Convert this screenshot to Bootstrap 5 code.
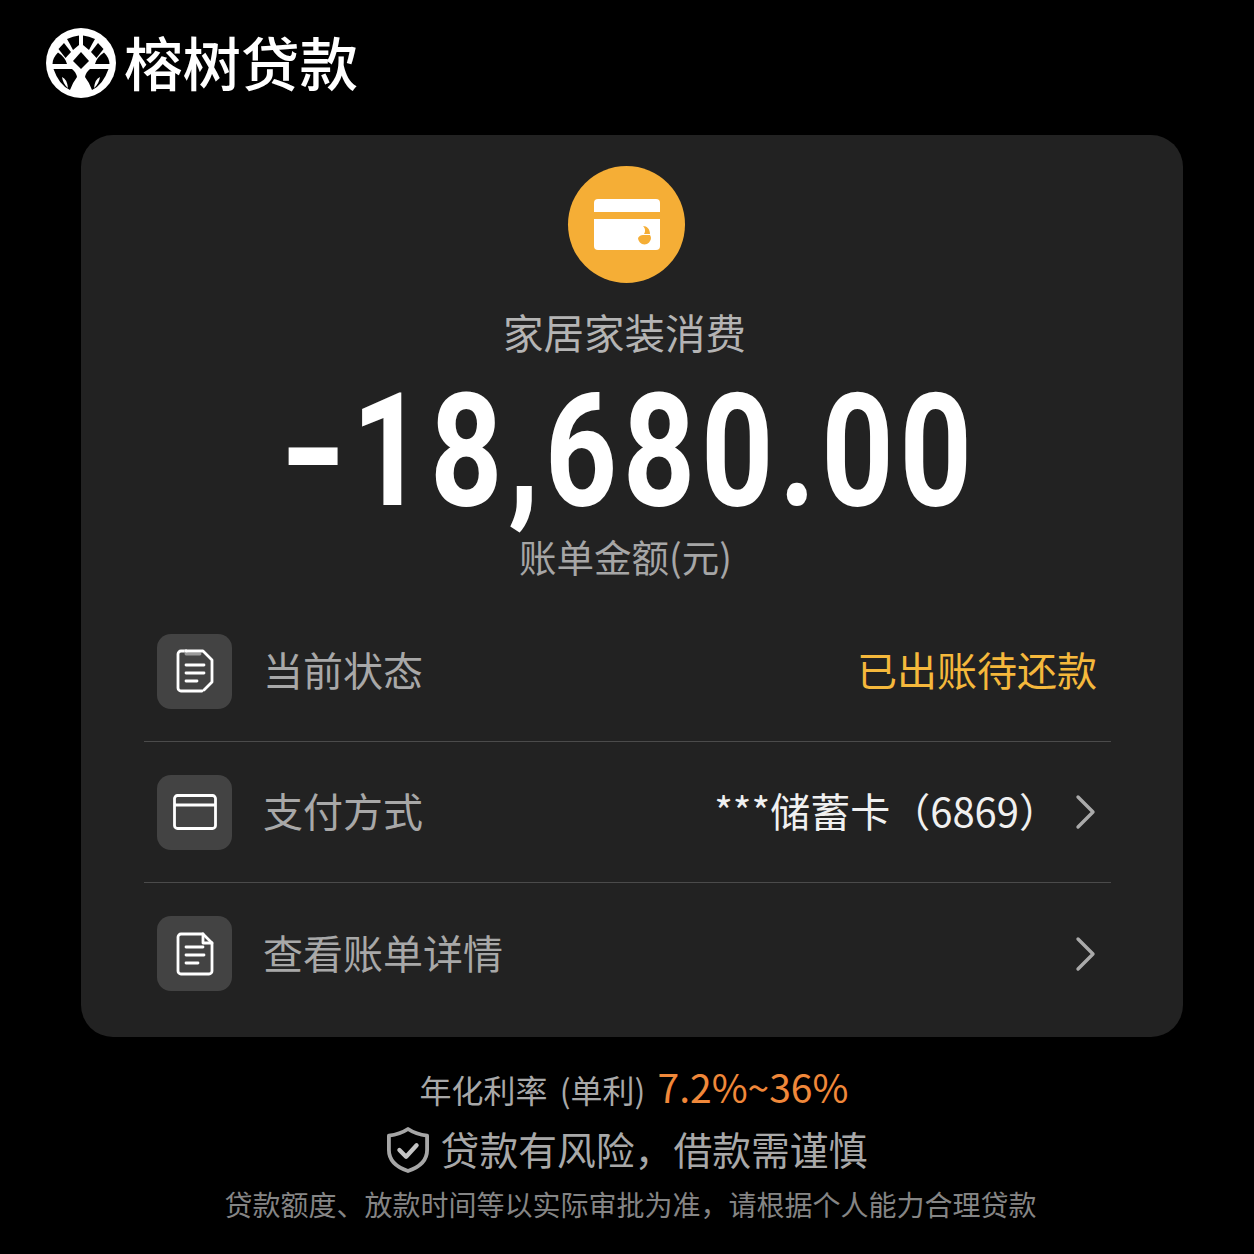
<!DOCTYPE html>
<html lang="zh-CN">

<head>
  <meta charset="UTF-8" />
  <meta name="viewport" content="width=device-width, initial-scale=1.0" />
  <title>账单详情</title>
  <link href="https://cdn.jsdelivr.net/npm/bootstrap@5.3.3/dist/css/bootstrap.min.css" rel="stylesheet" />
  <style>
    body {
      background: #000;
      font-family: "Noto Sans CJK SC", "Noto Sans", sans-serif;
      color: #fff;
      height: 1254px;
      overflow: hidden;
    }

    .brand-bar { height: 135px; padding: 28px 0 0 46px; gap: 8px; }
    .brand-name { font-size: 58.5px; line-height: 70px; font-weight: 500; margin-top: -2px; }

    .bill-card {
      margin: 0 71px 0 81px;
      height: 902px;
      background: #222;
      border-radius: 32px;
      padding: 31px 72px 0 63px;
    }

    .bill-circle { width: 117px; height: 117px; border-radius: 50%; background: #f5ae36; margin-left: -2px; }
    .bill-title { font-size: 40.5px; line-height: 58px; color: #b4b4b4; margin-top: 20px; margin-left: -6px; }
    .bill-amount {
      font-family: Roboto, sans-serif;
      font-weight: 700;
      font-size: 158px;
      line-height: 132px;
      height: 132px;
      letter-spacing: 7px;
      transform: scaleX(0.8);
      margin-top: 24px;
      margin-left: 12px;
      white-space: nowrap;
    }
    .amount-sign { display: inline-block; transform: scaleX(1.4); margin-right: 8px; }
    .bill-label { font-size: 37.5px; line-height: 52px; color: #a6a6a6; margin-top: 13px; margin-left: -4px; }

    .bill-rows { margin-top: 19px; }
    .bill-row { height: 141px; padding: 0 14px 0 13px; border-bottom: 1px solid #4b4b4b; }
    .bill-row:last-child { border-bottom: 0; }
    .row-icon { width: 75px; height: 75px; border-radius: 14px; background: #434343; margin-right: 31px; }
    .row-name { font-size: 40px; line-height: 56px; color: #a8a8a8; margin-top: -4px; }
    .row-status { font-size: 40px; line-height: 56px; color: #f5b83c; margin-top: -4px; }
    .row-value { font-size: 40px; line-height: 56px; color: #f0f0f0; margin-right: 16px; margin-top: -4px; }

    .foot-rate { font-size: 32px; line-height: 46px; color: #a8a8a8; margin-top: 26px; padding-left: 14px; word-spacing: 5px; }
    .foot-rate span { color: #f0883a; font-size: 39px; }
    .foot-risk { font-size: 38.800px; line-height: 56px; color: #a8a8a8; margin-top: 8px; gap: 12px; }
    .foot-risk svg { margin-top: 3px; }
    .foot-note { font-size: 28px; line-height: 40px; color: #858585; margin-top: 8px; padding-left: 7px; }
  </style>
</head>

<body>
  <div class="brand-bar d-flex align-items-start">
    <svg width="70" height="70" viewBox="0 0 70 70">
      <defs>
        <g id="logoHalf">
          <path d="M21 11 Q27 8 33 7.500 L33 17 L27 22 Q24 16 21 11Z" />
          <path d="M18 15 L25 24 L19.500 30 L12.500 21Z" />
          <path d="M12 24.500 Q19 29 21 36 L6.500 36 Q6.500 30 12 24.500Z" />
          <path d="M7.500 41 L26 41 Q30 44 31 49 Q27 54 24 62 Q13 57 7.500 41Z M16 49 Q21 51 22 60 Q17 56 16 49Z" fill-rule="evenodd" />
        </g>
      </defs>
      <circle cx="35" cy="35" r="35" fill="#fff" />
      <use href="#logoHalf" />
      <use href="#logoHalf" transform="matrix(-1 0 0 1 70 0)" />
      <path d="M35 24 L43 33 L35 41 L27 33Z" />
    </svg>
    <div class="brand-name">榕树贷款</div>
  </div>

  <div class="bill-card">
    <div class="d-flex flex-column align-items-center">
      <div class="bill-circle d-flex align-items-center justify-content-center">
        <svg width="66" height="51" viewBox="0 0 66 51">
          <path d="M0 4a4 4 0 0 1 4-4h58a4 4 0 0 1 4 4v9H0z" fill="#fff" />
          <path d="M0 20h66v27a4 4 0 0 1-4 4H4a4 4 0 0 1-4-4z" fill="#fff" />
          <path d="M44 39a6.500 6.500 0 0 0 13 0a6 6 0 0 0-1-3h-6a6 6 0 0 0-6 3z M49 27c4 0 7 3 7 8h-6c2-3 1-6-1-8z" fill="#f5ae36" />
        </svg>
      </div>
      <div class="bill-title">家居家装消费</div>
      <div class="bill-amount"><span class="amount-sign">-</span>18,680.00</div>
      <div class="bill-label">账单金额(元)</div>
    </div>

    <div class="bill-rows">
      <div class="bill-row d-flex align-items-center">
        <div class="row-icon d-flex align-items-center justify-content-center">
          <svg width="38" height="44" viewBox="0 0 38 44" fill="none" stroke="#fff" stroke-width="2.800" stroke-linejoin="round" stroke-linecap="round">
            <path d="M10 2H5a3 3 0 0 0-3 3v34a3 3 0 0 0 3 3h21" />
            <path d="M10 2v3h14" stroke="#999" />
            <path d="M10 2h17l9 9v22l-8 8" />
            <path d="M10 16h18M10 24h18M10 32h11" />
          </svg>
        </div>
        <div class="row-name">当前状态</div>
        <div class="row-status ms-auto">已出账待还款</div>
      </div>

      <div class="bill-row d-flex align-items-center">
        <div class="row-icon d-flex align-items-center justify-content-center">
          <svg width="44" height="36" viewBox="0 0 44 36" fill="none" stroke="#fff" stroke-width="2.800" stroke-linejoin="round">
            <rect x="1.500" y="1.500" width="41" height="33" rx="3" />
            <path d="M1.500 11h41" />
          </svg>
        </div>
        <div class="row-name">支付方式</div>
        <div class="row-value ms-auto">***储蓄卡（6869）</div>
        <svg width="22" height="36" viewBox="0 0 22 36" fill="none" stroke="#aaa" stroke-width="3.400" stroke-linecap="round" stroke-linejoin="round">
          <path d="M3 3l15 15L3 33" />
        </svg>
      </div>

      <div class="bill-row d-flex align-items-center">
        <div class="row-icon d-flex align-items-center justify-content-center">
          <svg width="38" height="44" viewBox="0 0 38 44" fill="none" stroke="#fff" stroke-width="2.800" stroke-linejoin="round" stroke-linecap="round">
            <path d="M27 2H5a3 3 0 0 0-3 3v34a3 3 0 0 0 3 3h28a3 3 0 0 0 3-3V11z" />
            <path d="M27 2v9h9" />
            <path d="M10 15h17M10 23h18M10 31h12" />
          </svg>
        </div>
        <div class="row-name">查看账单详情</div>
        <svg class="ms-auto" width="22" height="36" viewBox="0 0 22 36" fill="none" stroke="#aaa" stroke-width="3.400" stroke-linecap="round" stroke-linejoin="round">
          <path d="M3 3l15 15L3 33" />
        </svg>
      </div>
    </div>
  </div>

  <div class="text-center">
    <div class="foot-rate">年化利率 (单利) <span>7.2%~36%</span></div>
    <div class="foot-risk d-flex justify-content-center align-items-center">
      <svg width="42" height="48" viewBox="0 0 44 48" fill="none" stroke="#a6a6a6" stroke-width="4" stroke-linejoin="round" stroke-linecap="round">
        <path d="M22 2c6 4 12 6 20 7v15c0 11-8 18-20 22C10 42 2 35 2 24V9c8-1 14-3 20-7z" />
        <path d="M13 24l7 7 11-12" stroke="#c4c4c4" stroke-width="4.500" />
      </svg>
      <div>贷款有风险，借款需谨慎</div>
    </div>
    <div class="foot-note">贷款额度、放款时间等以实际审批为准，请根据个人能力合理贷款</div>
  </div>

  <script src="https://cdn.jsdelivr.net/npm/bootstrap@5.3.3/dist/js/bootstrap.bundle.min.js"></script>
</body>

</html>
